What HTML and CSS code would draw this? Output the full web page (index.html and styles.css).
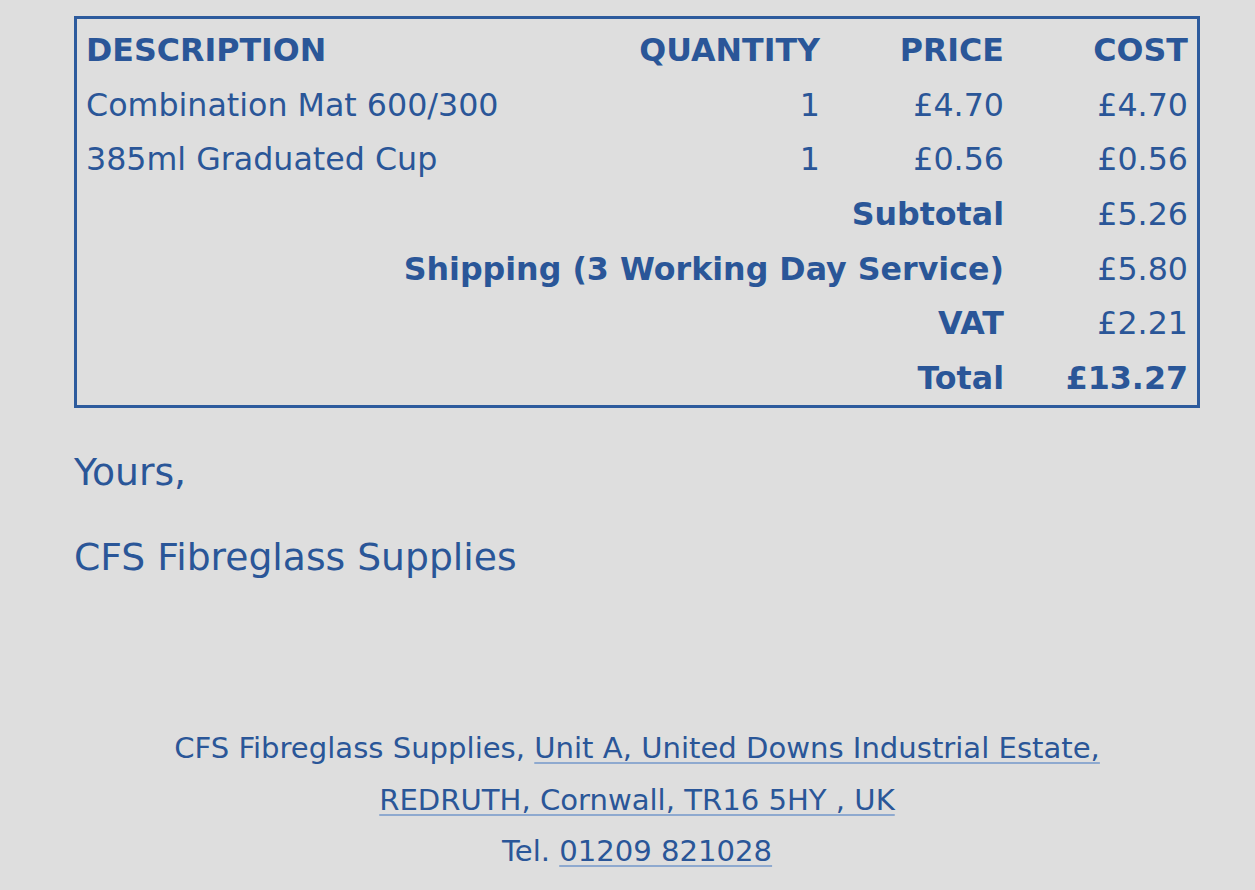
FILE: index.html
```html
<!DOCTYPE html>
<html lang="en">
<head>
<meta charset="utf-8">
<title>Order</title>
<link rel="stylesheet" href="styles.css">
</head>
<body>
<div class="page">
  <table class="order">
    <thead>
      <tr class="head-row">
        <th class="desc">DESCRIPTION</th>
        <th class="num">QUANTITY</th>
        <th class="num">PRICE</th>
        <th class="num">COST</th>
      </tr>
    </thead>
    <tbody>
      <tr>
        <td class="desc">Combination Mat 600/300</td>
        <td class="num">1</td>
        <td class="num">£4.70</td>
        <td class="num">£4.70</td>
      </tr>
      <tr>
        <td class="desc">385ml Graduated Cup</td>
        <td class="num">1</td>
        <td class="num">£0.56</td>
        <td class="num">£0.56</td>
      </tr>
      <tr>
        <th class="num label" colspan="3">Subtotal</th>
        <td class="num">£5.26</td>
      </tr>
      <tr>
        <th class="num label" colspan="3">Shipping (3 Working Day Service)</th>
        <td class="num">£5.80</td>
      </tr>
      <tr>
        <th class="num label" colspan="3">VAT</th>
        <td class="num">£2.21</td>
      </tr>
      <tr>
        <th class="num label" colspan="3">Total</th>
        <th class="num">£13.27</th>
      </tr>
    </tbody>
  </table>

  <p class="sign">Yours,</p>
  <p class="sign company">CFS Fibreglass Supplies</p>

  <footer class="footer">
    <p>CFS Fibreglass Supplies, <a href="#">Unit A, United Downs Industrial Estate,</a></p>
    <p><a href="#">REDRUTH, Cornwall, TR16 5HY , UK</a></p>
    <p>Tel. <a href="#">01209 821028</a></p>
  </footer>
</div>
</body>
</html>
```

FILE: styles.css
```css
html, body {
  margin: 0;
  padding: 0;
  background: #dedede;
}

body {
  font-family: "DejaVu Sans", Verdana, sans-serif;
  color: #2a5698;
}

.page {
  padding: 16px 55px 0 74px;
}

.order {
  width: 100%;
  border: 3px solid #2d5b9d;
  border-collapse: separate;
  border-spacing: 0;
  padding: 3px 9px 0 9px;
  font-size: 31.7px;
}

.order th,
.order td {
  height: 54.6px;
  padding: 0;
  vertical-align: middle;
  white-space: nowrap;
}

.order .head-row th {
  height: 55.5px;
}

.order th {
  font-weight: bold;
}

.desc {
  text-align: left;
}

.num {
  text-align: right;
  width: 184px;
}

.order .label {
  width: auto;
}

.sign {
  margin: 0;
  font-size: 37.7px;
  line-height: 44px;
}

.sign:first-of-type {
  margin-top: 42px;
}

.company {
  margin-top: 41px;
}

.footer {
  margin-top: 144px;
  text-align: center;
  font-size: 29.1px;
}

.footer p {
  margin: 0;
  line-height: 51.5px;
}

.footer a {
  color: #2a5698;
  text-decoration: underline;
  text-decoration-color: #8ea9cf;
  text-decoration-thickness: 2px;
  text-underline-offset: 4px;
}
```
